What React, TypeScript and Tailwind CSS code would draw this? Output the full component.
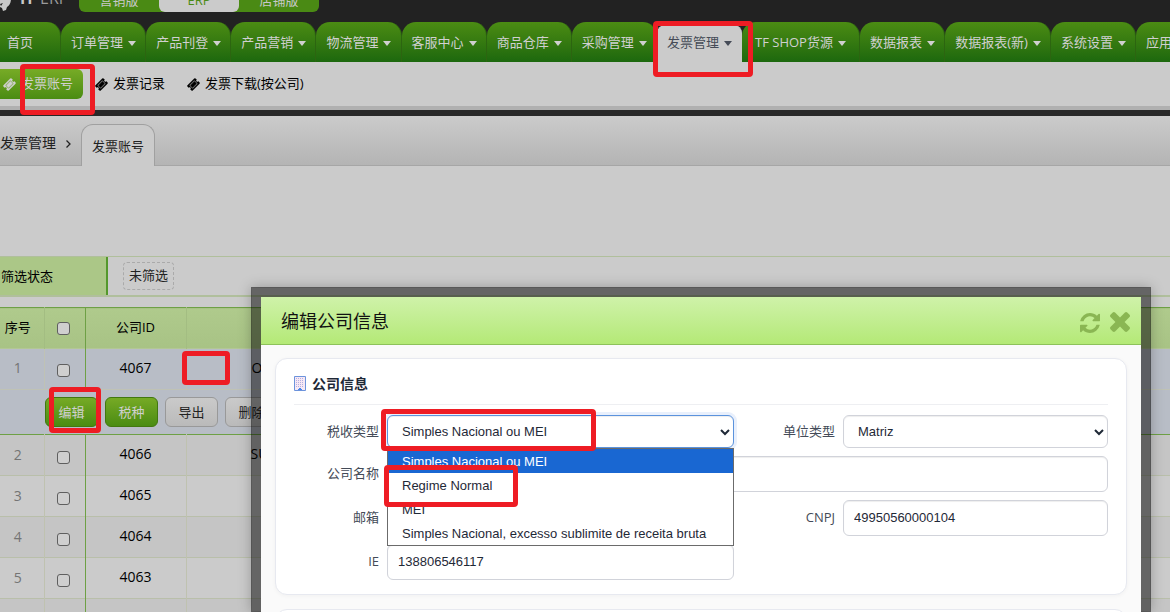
import clsx from 'clsx'

const menus = ['订单管理', '产品刊登', '产品营销', '物流管理', '客服中心', '商品仓库', '采购管理', '发票管理', 'TF SHOP货源', '数据报表', '数据报表(新)', '系统设置']

const rows = [
    { no: 2, id: '4066', name: 'SUPER LOJA', gray: true },
    { no: 3, id: '4065', name: '', gray: false },
    { no: 4, id: '4064', name: '', gray: true },
    { no: 5, id: '4063', name: '', gray: false },
    { no: 6, id: '4062', name: '', gray: true },
]

const taxTypes = ['Simples Nacional ou MEI', 'Regime Normal', 'MEI', 'Simples Nacional, excesso sublimite de receita bruta']

const marks = [
    'left-[653px] top-[21px] w-[100px] h-[56px]',
    'left-[20px] top-[64px] w-[75px] h-[51px]',
    'left-[182px] top-[351px] w-[48px] h-[34px]',
    'left-[49px] top-[387px] w-[52px] h-[46px]',
    'left-[381px] top-[409px] w-[215px] h-[42px]',
    'left-[384px] top-[465px] w-[134px] h-[42px]',
]

const control = 'w-full rounded-md border bg-white font-["Liberation_Sans",Arial,sans-serif] text-[13px] text-[#1f2937] shadow-[inset_0_1px_1px_rgba(0,0,0,0.07)] outline-none'
const label = 'pr-2 text-right text-[13px] text-[#444b58]'

function Ticket() {
    return (
        <svg viewBox="0 0 1792 1792" className="size-[13px] shrink-0" fill="currentColor" stroke="currentColor" strokeWidth="60">
            <path d="M1024 452l316 316-572 572-316-316zm-211 979l618-618q19-19 19-45t-19-45l-362-362q-18-18-45-18t-45 18l-618 618q-19 19-19 45t19 45l362 362q18 18 45 18t45-18zm889-637l-907 908q-37 37-90.5 37t-90.5-37l-126-126q56-56 56-136t-56-136-136-56-136 56l-125-126q-37-37-37-90.5t37-90.5l907-906q37-37 90.5-37t90.5 37l125 125q-56 56-56 136t56 136 136 56 136-56l126 125q37 37 37 90.5t-37 90.5z" />
        </svg>
    )
}

function Check({ name }: { name: string }) {
    return <input type="checkbox" aria-label={name} className="ml-3 block size-[13px] appearance-none rounded-[3px] border border-[#5f5f5f] bg-[#cfcfcf]" />
}

function Arrow() {
    return (
        <svg viewBox="0 0 12 8" className="pointer-events-none absolute top-1/2 right-[3px] h-2 w-3 -translate-y-1/2">
            <path d="M2 2l4 4 4-4" fill="none" stroke="#1f2937" strokeWidth="2" />
        </svg>
    )
}

function Header() {
    return (
        <header className="bg-[#222]">
            <div className="flex h-3 items-end overflow-hidden text-[13px]">
                <div className="flex w-[79px] shrink-0 items-end">
                    <svg viewBox="0 0 14 14" className="h-3.5 w-3.5 shrink-0" fill="#c8c8c8">
                        <path d="M0 2L11 1C11 5 9 8 7 9L6 12L3 13L2 10L0 9z" />
                        <path d="M0 6l3-1-2 3z" fill="#222" />
                    </svg>
                    <span className="ml-1 pb-1.5 text-base leading-4 font-bold text-[#c8c8c8]">TF</span>
                    <span className="ml-1 pb-1.5 text-base leading-4 text-[#9a9a9a]">ERP</span>
                </div>
                <div className="flex shrink-0 rounded-b-md bg-[#4a8a14] text-[#c8c8c8]">
                    <button className="w-20 pb-0.5 leading-5">营销版</button>
                    <button className="w-20 rounded-b-md bg-[#cbcbcb] pb-0.5 leading-5 text-[#4a8a14]">ERP</button>
                    <button className="w-20 pb-0.5 leading-5">店铺版</button>
                </div>
            </div>
            <nav className="mt-2.5 flex h-10 overflow-hidden text-[13px] whitespace-nowrap text-[#d0d0d0]">
                <a href="#" className="flex w-[61px] shrink-0 items-center rounded-tr-[14px] border-r border-[#2c6510] bg-linear-to-b from-[#4b8c13] to-[#1c680e] pt-0.5 pl-[7px]">首页</a>
                {
                    menus.map((menu) => {
                        const active = menu === '发票管理'
                        return (
                            <a key={menu} href="#" className={clsx('flex shrink-0 grow items-center justify-center gap-[5px] border-r', menu.startsWith('TF') ? 'px-3' : 'pr-2 pl-[9px]', active ? 'mt-[3px] rounded-t-lg border-[#cbcbcb] bg-[#cbcbcb] pb-px text-[#454b57]' : 'rounded-t-[14px] border-[#2c6510] bg-linear-to-b from-[#4b8c13] to-[#1c680e] pt-0.5')}>
                                {menu}
                                <svg viewBox="0 0 8 5" className="h-[5px] w-2" fill="currentColor"><path d="M0 0h8L4 5z" /></svg>
                            </a>
                        )
                    })
                }
                <a href="#" className="flex w-[34px] shrink-0 items-center overflow-hidden rounded-tl-[14px] bg-linear-to-b from-[#4b8c13] to-[#1c680e] pt-0.5 pl-2.5">应用</a>
            </nav>
        </header>
    )
}

function SubNav() {
    return (
        <nav className="flex h-12 items-start border-b-4 border-[#b0b0b0] bg-[#cbcbcb] pt-[7px] text-[13px] text-black">
            <a href="#" className="mr-3 flex h-[30px] w-[83px] items-center gap-[5px] rounded-r-md bg-linear-to-b from-[#77ab26] to-[#4a8c12] pl-[3px] text-[#d0d0d0]"><Ticket />发票账号</a>
            <a href="#" className="mr-[22px] flex h-[30px] items-center gap-[5px]"><Ticket />发票记录</a>
            <a href="#" className="flex h-[30px] items-center gap-[5px]"><Ticket />发票下载(按公司)</a>
        </nav>
    )
}

function Companies() {
    return (
        <table className="w-full table-fixed border-collapse text-sm text-black">
            <colgroup>
                <col className="w-11" />
                <col className="w-[41px]" />
                <col className="w-[101px]" />
                <col />
            </colgroup>
            <thead>
                <tr className="h-[41px] border-t border-b border-t-[#6ea045] border-b-[#b3c795] bg-linear-to-b from-[#afca8c] to-[#a8c385] text-[13px]">
                    <th className="border-r border-[#a3bd82] pr-2 pb-0.5 font-normal">序号</th>
                    <th className="border-r border-[#6ea045]"><Check name="全选" /></th>
                    <th className="border-r border-[#a3bd82] pb-0.5 font-normal">公司ID</th>
                    <th></th>
                </tr>
            </thead>
            <tbody>
                <tr className="h-[41px] border-b border-[#bfc2b5] bg-[#b8bdc6]">
                    <td className="border-r border-[#bfc2b5] pr-2 pb-0.5 text-center text-[#747474]">1</td>
                    <td className="border-r border-[#6ea045] pt-0.5"><Check name="4067" /></td>
                    <td className="border-r border-[#bfc2b5] pb-0.5 text-center">4067</td>
                    <td className="pb-0.5 pl-[65px]">OLIVEIRA</td>
                </tr>
                <tr className="h-[45px] border-b border-[#6ea045] bg-[#b8bdc6] text-[13px]">
                    <td></td>
                    <td colSpan={3}>
                        <div className="flex gap-[7px] pl-px">
                            <button className="h-[30px] w-[53px] rounded-md border border-[#42780f] bg-linear-to-b from-[#76aa25] to-[#4a8c12] text-[#d0d0d0]">编辑</button>
                            <button className="h-[30px] w-[53px] rounded-md border border-[#42780f] bg-linear-to-b from-[#76aa25] to-[#4a8c12] text-[#d0d0d0]">税种</button>
                            <button className="h-[30px] w-[53px] rounded-md border border-[#999] bg-linear-to-b from-[#cacaca] to-[#bababa] text-[#222]">导出</button>
                            <button className="h-[30px] w-[53px] rounded-md border border-[#999] bg-linear-to-b from-[#cacaca] to-[#bababa] text-[#222]">删除</button>
                        </div>
                    </td>
                </tr>
                {
                    rows.map(({ no, id, name, gray }) => {
                        return (
                            <tr key={id} className={clsx('h-[41px] border-b border-[#b9bfaa]', gray ? 'bg-[#c5c5c5]' : 'bg-[#cbcbcb]')}>
                                <td className="border-r border-[#bfc2b0] pr-2 text-center text-[#747474]">{no}</td>
                                <td className="border-r border-[#6ea045] pt-1"><Check name={id} /></td>
                                <td className="border-r border-[#bfc2b0] pb-0.5 text-center">{id}</td>
                                <td className="pb-0.5 pl-16">{name}</td>
                            </tr>
                        )
                    })
                }
            </tbody>
        </table>
    )
}

function CompanyDialog() {
    return (
        <div role="dialog" aria-label="编辑公司信息" className="absolute top-[287px] right-[19px] bottom-0 left-[251px] overflow-hidden border-x-[10px] border-t-[10px] border-black/50 bg-[#fafafa] bg-clip-padding shadow-[0_0_12px_rgba(0,0,0,0.25)]">
            <div className="flex h-12 items-center border-b border-[#8dc25a] bg-linear-to-b from-[#cff2a9] to-[#b4e976] pr-[11px] pl-5">
                <h2 className="flex-1 text-lg text-[#111]">编辑公司信息</h2>
                <button aria-label="刷新" className="mr-2.5 pt-1 text-[#8ab653]">
                    <svg viewBox="0 128 1536 1536" className="size-5" fill="currentColor">
                        <path d="M1511 1056q0 5-1 7-64 268-268 434.5t-478 166.5q-146 0-282.5-55t-243.5-157l-129 129q-19 19-45 19t-45-19-19-45v-448q0-26 19-45t45-19h448q26 0 45 19t19 45-19 45l-137 137q71 66 161 102t187 36q134 0 250-65t186-179q11-17 53-117 8-23 30-23h192q13 0 22.5 9.5t9.5 22.5zm25-800v448q0 26-19 45t-45 19h-448q-26 0-45-19t-19-45 19-45l138-138q-148-137-349-137-134 0-250 65t-186 179q-11 17-53 117-8 23-30 23h-199q-13 0-22.5-9.5t-9.5-22.5v-7q65-268 270-434.5t480-166.5q146 0 284 55.5t245 156.5l130-129q19-19 45-19t45 19 19 45z" />
                    </svg>
                </button>
                <button aria-label="关闭" className="pt-0.5 text-[#8ab653]">
                    <svg viewBox="110 366 1188 1188" className="size-5" fill="currentColor">
                        <path d="M1298 1322q0 40-28 68l-136 136q-28 28-68 28t-68-28l-294-294-294 294q-28 28-68 28t-68-28l-136-136q-28-28-28-68t28-68l294-294-294-294q-28-28-28-68t28-68l136-136q28-28 68-28t68 28l294 294 294-294q28-28 68-28t68 28l136 136q28 28 28 68t-28 68l-294 294 294 294q28 28 28 68z" />
                    </svg>
                </button>
            </div>
            <section className="mx-3.5 mt-[13px] rounded-xl border border-[#e7e9f0] bg-white px-[18px] pb-3.5 shadow-[0_1px_4px_rgba(0,0,0,0.04)]">
                <h3 className="flex h-[46px] items-center gap-1.5 border-b border-[#eeeff2] pt-1 text-sm font-bold text-[#1f2937]">
                    <svg viewBox="0 0 12 15" className="h-[15px] w-3">
                        <path d="M.5.5h11v14h-11z" fill="#f6e8f4" stroke="#6c93dc" />
                        <path d="M2 2.5h8M2 4.5h8M2 6.5h8M2 8.5h8M2 10.5h8" stroke="#b5aee2" strokeDasharray="1 1" />
                        <path d="M4 13h1v-1h2v1h1v1H4z" fill="#4a86ea" />
                    </svg>
                    公司信息
                </h3>
                <div className="mt-2.5 grid grid-cols-[93px_347px_109px_1fr] items-center gap-y-2">
                    <label htmlFor="tax" className={label}>税收类型</label>
                    <div className="relative">
                        <select id="tax" className={clsx(control, 'h-[33px] appearance-none border-[#5b93dd] pl-3.5 ring-3 ring-[#e9f0fc]')}>
                            {
                                taxTypes.map((type) => <option key={type}>{type}</option>)
                            }
                        </select>
                        <Arrow />
                        <ul role="listbox" aria-label="税收类型" className='absolute inset-x-0 top-full z-10 border border-[#6b6b6b] bg-white font-["Liberation_Sans",Arial,sans-serif] text-[13px] text-[#1f2937]'>
                            {
                                taxTypes.map((type, i) => (
                                    <li key={type} role="option" aria-selected={i === 0} className={clsx('h-6 px-3.5 pt-0.5 leading-[22px]', i === 0 && 'bg-[#1967d2] text-white')}>{type}</li>
                                ))
                            }
                        </ul>
                    </div>
                    <label htmlFor="unit" className={label}>单位类型</label>
                    <div className="relative">
                        <select id="unit" className={clsx(control, 'h-[33px] appearance-none border-[#d1d3da] pl-3.5')}>
                            <option>Matriz</option>
                        </select>
                        <Arrow />
                    </div>
                    <label htmlFor="name" className={label}>公司名称</label>
                    <input id="name" className={clsx(control, 'col-span-3 h-9 border-[#d1d3da] px-2.5')} />
                    <label htmlFor="mail" className={label}>邮箱</label>
                    <input id="mail" className={clsx(control, 'h-9 border-[#d1d3da] px-2.5')} />
                    <label htmlFor="cnpj" className={label}>CNPJ</label>
                    <input id="cnpj" defaultValue="49950560000104" className={clsx(control, 'h-9 border-[#d1d3da] px-2.5 pb-0.5')} />
                    <label htmlFor="ie" className={label}>IE</label>
                    <input id="ie" defaultValue="138806546117" className={clsx(control, 'h-9 border-[#d1d3da] px-2.5 pb-0.5')} />
                </div>
            </section>
            <section className="mx-3.5 mt-3.5 h-20 rounded-xl border border-[#e7e9f0] bg-white"></section>
        </div>
    )
}

export default function App() {
    return (
        <div className='relative h-screen overflow-hidden bg-[#cbcbcb] font-["Open_Sans","Noto_Sans_CJK_SC",sans-serif]'>
            <Header />
            <SubNav />
            <div className="flex h-14 items-start border-t-6 border-b border-t-[#282828] border-b-[#a6a6a6] bg-linear-to-b from-[#cbcbcb] to-[#b4b4b4]">
                <a href="#" className="mt-[17px] text-sm text-[#222]">发票管理</a>
                <svg viewBox="0 0 5 8" className="mx-2.5 mt-6 h-2 w-[5px]"><path d="M.5.5L4 4L.5 7.5" fill="none" stroke="#222" strokeWidth="1.3" /></svg>
                <a href="#" className="mt-2 flex h-[42px] w-[74px] items-center justify-center rounded-t-xl border border-b-0 border-[#a0a0a0] bg-[#cbcbcb] pt-0.5 text-[13px] text-[#222]">发票账号</a>
            </div>
            <div className="mt-[90px] flex h-[41px] border-t border-b-2 border-[#b0bf9c] text-[13px]">
                <div className="flex w-[108px] items-center border-r-2 border-[#54982c] bg-[#abc787] pt-0.5 pl-px text-black">筛选状态</div>
                <div className="ml-[15px] flex h-7 w-[51px] items-center justify-center self-center rounded-sm border border-dashed border-[#aaa] text-[#222]">未筛选</div>
            </div>
            <div className="mt-2.5">
                <Companies />
            </div>
            <CompanyDialog />
            {
                marks.map((mark) => <div key={mark} className={clsx('pointer-events-none absolute z-20 rounded-sm border-5 border-[#ee1c24]', mark)}></div>)
            }
        </div>
    )
}
